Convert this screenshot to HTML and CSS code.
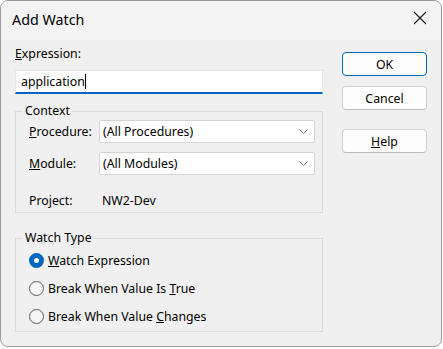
FILE: index.html
```html
<!DOCTYPE html>
<html lang="en">
<head>
  <meta charset="UTF-8" />
  <title>Add Watch</title>
  <link rel="stylesheet" href="styles.css">
</head>
<body>
  <div class="window">
    <div class="title-bar">
      <span class="title">Add Watch</span>
      <svg class="close" width="14" height="14" viewBox="0 0 14 14">
        <path d="M1 1 L13 13 M13 1 L1 13" stroke="#1a1a1a" stroke-width="1.1" fill="none" />
      </svg>
    </div>

    <div class="main">
      <div class="left">
        <div class="label"><u>E</u>xpression:</div>
        <div class="text-input">application<span class="caret"></span></div>

        <fieldset class="group context">
          <legend>Context</legend>
          <div class="row">
            <span class="row-label"><u>P</u>rocedure:</span>
            <div class="combo">
              <span>(All Procedures)</span>
              <svg width="9" height="5" viewBox="0 0 9 5"><path d="M0.5 0.5 L4.5 4.5 L8.5 0.5" stroke="#6a6a6a" stroke-width="1" fill="none" /></svg>
            </div>
          </div>
          <div class="row">
            <span class="row-label"><u>M</u>odule:</span>
            <div class="combo">
              <span>(All Modules)</span>
              <svg width="9" height="5" viewBox="0 0 9 5"><path d="M0.5 0.5 L4.5 4.5 L8.5 0.5" stroke="#6a6a6a" stroke-width="1" fill="none" /></svg>
            </div>
          </div>
          <div class="row project">
            <span class="row-label">Project:</span>
            <span class="project-name">NW2-Dev</span>
          </div>
        </fieldset>

        <fieldset class="group watch-type">
          <legend>Watch Type</legend>
          <div class="radio-row">
            <span class="radio checked"></span>
            <span><u>W</u>atch Expression</span>
          </div>
          <div class="radio-row">
            <span class="radio"></span>
            <span>Break When Value Is <u>T</u>rue</span>
          </div>
          <div class="radio-row">
            <span class="radio"></span>
            <span>Break When Value <u>C</u>hanges</span>
          </div>
        </fieldset>
      </div>

      <div class="buttons">
        <button class="btn default">OK</button>
        <button class="btn">Cancel</button>
        <button class="btn help"><u>H</u>elp</button>
      </div>
    </div>
  </div>
</body>
</html>
```

FILE: styles.css
```css
* {
  box-sizing: border-box;
}

body {
  margin: 0;
  padding: 0;
  background: #ffffff;
  font-family: 'Noto Sans', 'Open Sans', sans-serif;
  font-size: 12.3px;
  color: #000;
}

.window {
  width: 442px;
  height: 347px;
  border: 1px solid #9a9a9a;
  border-radius: 8px;
  background: #f0f0f0;
  overflow: hidden;
}

.title-bar {
  height: 39px;
  background: #f3f3f3;
  display: flex;
  align-items: center;
  justify-content: space-between;
  padding: 0 14px 2px 11px;
}

.title {
  font-size: 14.3px;
}

.close {
  display: block;
  margin-top: -3px;
}

.main {
  display: flex;
  padding: 6px 14px 0 14px;
}

.left {
  width: 308px;
}

.label {
  height: 16px;
  line-height: 16px;
}

.text-input {
  margin-top: 8px;
  height: 24px;
  background: #fff;
  border: 1px solid #e6e6e6;
  border-bottom: 2px solid #0067c0;
  padding: 0 5px;
  line-height: 21px;
  display: flex;
  align-items: center;
}

.caret {
  display: inline-block;
  width: 1px;
  height: 15px;
  background: #000;
}

.group {
  margin: 9px 0 0 0;
  border: 1px solid #dadada;
  padding: 0 7px 4px 13px;
}

.group legend {
  margin-left: -6px;
  padding: 0 2px;
  line-height: 16px;
}

.context .row {
  display: flex;
  align-items: center;
  height: 23px;
  margin-top: 9px;
}

.context .row:first-of-type {
  margin-top: 1px;
}

.row-label {
  width: 70px;
}

.combo {
  width: 216px;
  height: 23px;
  background: #fff;
  border: 1px solid #d4d4d4;
  border-radius: 2px;
  display: flex;
  align-items: center;
  justify-content: space-between;
  padding: 0 6px 0 3px;
}

.context .project {
  height: 16px;
  margin-top: 17px;
}

.project-name {
  margin-left: 3px;
}

.watch-type {
  margin-top: 17px;
  padding-bottom: 1px;
}

.radio-row {
  display: flex;
  align-items: center;
  height: 28px;
}

.radio {
  width: 15px;
  height: 15px;
  border-radius: 50%;
  border: 1px solid #5c5c5c;
  background: #f6f6f6;
  margin-right: 4px;
}

.radio.checked {
  border: 5px solid #0067c0;
  background: #fff;
}

.buttons {
  display: flex;
  flex-direction: column;
  margin-left: 19px;
  padding-top: 6px;
}

.btn {
  width: 85px;
  height: 24px;
  margin-bottom: 10px;
  font-family: inherit;
  font-size: 12.3px;
  background: #fdfdfd;
  border: 1px solid #d0d0d0;
  border-bottom-color: #bdbdbd;
  border-radius: 4px;
  color: #000;
  padding: 0;
}

.btn.default {
  border: 1px solid #0067c0;
}

.btn.help {
  margin-top: 9px;
}
```
